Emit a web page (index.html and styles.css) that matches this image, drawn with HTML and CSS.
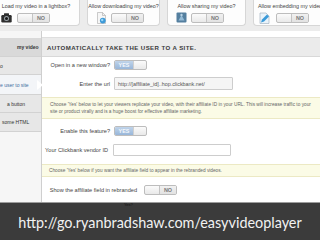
FILE: index.html
```html
<!DOCTYPE html>
<html>
<head>
<meta charset="utf-8">
<link rel="stylesheet" href="styles.css">
</head>
<body>
<div class="page">
  <div class="top">
    <div class="card c1">
      <div class="card-title">Load my video in a lightbox?</div>
      <div class="card-row">
        <svg class="ico" width="11" height="11" viewBox="0 0 11 11"><rect x="0.3" y="3" width="10.4" height="7.4" rx="1.2" fill="#2e2e2e"/><rect x="3" y="1.3" width="5" height="2.2" rx="0.5" fill="#2e2e2e"/><circle cx="5.5" cy="6.6" r="2.5" fill="#9aa3a8"/><circle cx="5.5" cy="6.6" r="1.5" fill="#1a1a1a"/></svg>
        <span class="tog no"><span class="tog-a"></span><span class="tog-b">NO</span></span>
      </div>
    </div>
    <div class="card c2">
      <div class="card-title">Allow downloading my video?</div>
      <div class="card-row">
        <svg class="ico" width="11" height="12" viewBox="0 0 11 12"><path d="M1.5 .5h5l3 3v8h-8z" fill="#f6f6f6" stroke="#aaa" stroke-width=".6"/><path d="M6.5 .5v3h3" fill="none" stroke="#aaa" stroke-width=".6"/><circle cx="6.8" cy="8.6" r="2.9" fill="#3d9ad8"/><circle cx="6.2" cy="8" r="1.2" fill="#9ad6f7"/></svg>
        <span class="tog no"><span class="tog-a"></span><span class="tog-b">NO</span></span>
      </div>
    </div>
    <div class="card c3">
      <div class="card-title">Allow sharing my video?</div>
      <div class="card-row">
        <svg class="ico" width="11" height="11" viewBox="0 0 11 11"><rect x=".5" y=".5" width="10" height="10" rx="1" fill="#547f9f"/><path d="M2.5 8.5l3-5.5 3 5.5z" fill="#93bad6"/><circle cx="5.5" cy="3" r="1.2" fill="#b9d4e6"/></svg>
        <span class="tog no"><span class="tog-a"></span><span class="tog-b">NO</span></span>
      </div>
    </div>
    <div class="card c4">
      <div class="card-title">Allow embedding my video?</div>
      <div class="card-row">
        <svg class="ico" width="11" height="12" viewBox="0 0 11 12"><path d="M1 1h6l3 3v7.5H1z" fill="#eaf3fa" stroke="#9ab" stroke-width=".6"/><path d="M2 10.5l1-3 5-5 2 2-5 5z" fill="#3a9ad9"/></svg>
        <span class="tog no"><span class="tog-a"></span><span class="tog-b">NO</span></span>
      </div>
    </div>
  </div>

  <div class="main">
    <aside class="side">
      <div class="side-item head">my video</div>
      <div class="side-item i2">o</div>
      <div class="side-item sel">e user to site</div>
      <div class="side-item i4">a button</div>
      <div class="side-item i5">some HTML</div>
    </aside>

    <section class="content">
      <div class="content-head">AUTOMATICALLY TAKE THE USER TO A SITE.</div>

      <div class="row r1">
        <span class="lbl">Open in a new window?</span>
        <span class="tog yes"><span class="tog-a">YES</span><span class="tog-b"></span></span>
      </div>

      <div class="row r2">
        <span class="lbl">Enter the url</span>
        <span class="inp grey">http://[affiliate_id]..hop.clickbank.net/</span>
      </div>

      <div class="notice n1">Choose 'Yes' below to let your viewers replicate your video, with their affiliate ID in your URL. This will increase traffic to your site or product virally and is a huge boost for effective affiliate marketing.</div>

      <div class="row r3">
        <span class="lbl">Enable this feature?</span>
        <span class="tog yes"><span class="tog-a">YES</span><span class="tog-b"></span></span>
      </div>

      <div class="row r4">
        <span class="lbl">Your Clickbank vendor ID</span>
        <span class="inp"></span>
      </div>

      <div class="notice n2">Choose 'Yes' below if you want the affiliate field to appear in the rebranded videos.</div>

      <div class="row r5">
        <span class="lbl">Show the affiliate field in rebranded</span>
        <span class="tog no"><span class="tog-a"></span><span class="tog-b">NO</span></span>
      </div>
    </section>
  </div>

  <div class="banner">
    <span class="banner-note">Yes?</span>
    <span class="banner-url">http://go.ryanbradshaw.com/easyvideoplayer</span>
  </div>
</div>
</body>
</html>
```

FILE: styles.css
```css
* { box-sizing: border-box; }
html, body { margin: 0; padding: 0; }
body {
  width: 320px;
  height: 240px;
  overflow: hidden;
  font-family: "Liberation Sans", Arial, sans-serif;
  background: #ffffff;
  color: #333;
}
.page {
  display: flex;
  flex-direction: column;
  width: 320px;
  height: 240px;
  overflow: hidden;
}

/* top cards */
.top {
  height: 31px;
  flex: none;
  background: #ececec;
  display: flex;
  gap: 7px;
  margin-left: -8px;
  width: 328px;
  overflow: hidden;
}
.card {
  height: 26px;
  background: #fdfdfd;
  border: 1px solid #d6d6d6;
  border-top: none;
  border-radius: 0 0 4px 4px;
  flex: none;
  overflow: hidden;
}
.c1 { width: 88px; }
.c2 { width: 73px; }
.c3 { width: 79px; }
.c4 { width: 80px; }
.card-title {
  font-size: 5.4px;
  line-height: 7px;
  color: #444;
  text-align: center;
  white-space: nowrap;
  padding-top: 3px;
}
.c4 .card-title { text-align: left; padding-left: 4px; }
.card-row {
  display: flex;
  align-items: center;
  gap: 4px;
  padding-left: 8px;
  margin-top: 2px;
}
.c1 .card-row { gap: 5px; }
.c4 .card-row { padding-left: 5px; gap: 6px; }
.ico { flex: none; display: block; }

/* toggles */
.tog {
  display: inline-flex;
  flex: none;
  width: 33px;
  height: 10px;
  border: 1px solid #bdbdbd;
  border-radius: 2px;
  overflow: hidden;
  background: linear-gradient(#fbfbfb, #e9e9e9);
  font-size: 5.4px;
  font-weight: bold;
}
.tog-a, .tog-b {
  display: flex;
  align-items: center;
  justify-content: center;
}
.no .tog-a { width: 14px; }
.no .tog-b {
  flex: 1;
  border-left: 1px solid #c4c4c4;
  background: linear-gradient(#f1f1f1, #e2e2e2);
  color: #7a7a7a;
}
.yes .tog-a {
  width: 18px;
  background: linear-gradient(#c0d4ea, #98b6d9);
  color: #f4f8fc;
}
.yes .tog-b {
  flex: 1;
  border-left: 1px solid #d0d0d0;
}

/* main */
.main {
  flex: none;
  height: 171px;
  display: flex;
}
.side {
  width: 41px;
  flex: none;
  background: #f6f6f6;
  padding-top: 7px;
  display: flex;
  flex-direction: column;
}
.side-item {
  height: 19px;
  flex: none;
  background: #e7e7e7;
  border-bottom: 1px solid #d2d2d2;
  font-size: 5px;
  color: #333;
  white-space: nowrap;
  display: flex;
  align-items: center;
  position: relative;
}
.side-item.head {
  background: #d9d9d9;
  font-weight: bold;
  padding-left: 17px;
}
.i2 { height: 18px; }
.i4 { height: 18px; padding-left: 7px; }
.i5 { padding-left: 2px; }
.side-item.sel {
  height: 20px;
  background: #f3f5f8;
  color: #3f6f9f;
}
.side-item.sel::after {
  content: "";
  position: absolute;
  right: -2px;
  top: 5px;
  width: 0;
  height: 0;
  border-top: 5px solid transparent;
  border-bottom: 5px solid transparent;
  border-left: 6px solid #ffffff;
  z-index: 2;
}

.content {
  flex: 1;
  background: #ffffff;
  border-left: 1px solid #cfcfcf;
  padding-top: 6px;
  display: flex;
  flex-direction: column;
  min-width: 0;
}
.content-head {
  height: 20px;
  flex: none;
  background: #ebebeb;
  border-top: 1px solid #dedede;
  border-bottom: 1px solid #d8d8d8;
  font-size: 6.1px;
  font-weight: bold;
  letter-spacing: 0.4px;
  color: #3a3a3a;
  padding-left: 5px;
  display: flex;
  align-items: center;
  white-space: nowrap;
}
.row {
  display: flex;
  align-items: center;
  gap: 4px;
  flex: none;
}
.lbl {
  width: 68px;
  flex: none;
  text-align: right;
  font-size: 5.6px;
  color: #444;
  white-space: nowrap;
}
.r1 { margin-top: 3px; }
.r2 { margin-top: 7px; }
.r3 { margin-top: 7px; }
.r4 { margin-top: 8px; gap: 5px; }
.r5 { margin-top: 8px; gap: 7px; }
.r4 .lbl { width: 66px; }
.r5 .lbl { width: 95px; }

.inp {
  width: 119px;
  height: 13px;
  border: 1px solid #cdcdcd;
  border-radius: 1px;
  background: #ffffff;
  font-size: 5.4px;
  color: #555;
  padding-left: 3px;
  display: flex;
  align-items: center;
  white-space: nowrap;
  overflow: hidden;
}
.inp.grey { background: #f5f5f5; }
.r4 .inp { height: 12px; width: 118px; }

.notice {
  flex: none;
  background: #fbfbe6;
  border-top: 1px solid #ece9c4;
  border-bottom: 1px solid #ece9c4;
  font-size: 4.75px;
  line-height: 7px;
  color: #666;
  padding: 3px 5px 3px 8px;
}
.n1 { margin-top: 7px; }
.n2 { margin-top: 8px; padding: 2px 6px 2px 7px; }

/* banner */
.banner {
  flex: none;
  height: 38px;
  background: #3b3b3b;
  border-top: 1px solid #9c9c9c;
  position: relative;
  display: flex;
  align-items: center;
  justify-content: center;
}
.banner-note {
  position: absolute;
  left: 124px;
  top: 0;
  font-size: 4px;
  line-height: 4px;
  color: #111;
}
.banner-url {
  font-family: Lato, "Open Sans", sans-serif;
  font-size: 14.4px;
  color: #f2f2f2;
  white-space: nowrap;
  padding-top: 2px;
}
```
